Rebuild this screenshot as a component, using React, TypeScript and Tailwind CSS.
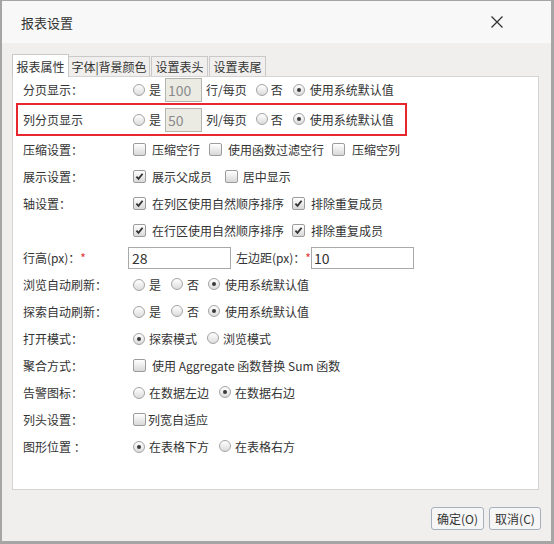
import React from "react";

const Radio = ({ checked = false }: { checked?: boolean }) => (
  <span className="relative inline-block w-[12px] h-[12px] shrink-0 rounded-full border border-[#a3a3a3] bg-linear-to-b from-[#ffffff] to-[#dcdcdc]">
    {checked && (
      <span className="absolute left-[3px] top-[3px] w-[4px] h-[4px] rounded-full bg-[#3a3a3a]" />
    )}
  </span>
);

const Check = ({ checked = false }: { checked?: boolean }) => (
  <span className="relative inline-flex items-center justify-center w-[13px] h-[13px] shrink-0 rounded-[2px] border border-[#9c9c9c] bg-linear-to-b from-[#ffffff] to-[#d8d8d8]">
    {checked && (
      <svg width="11" height="11" viewBox="0 0 11 11">
        <path d="M2.4 5.6 L4.5 7.8 L8.6 2.8" fill="none" stroke="#333" strokeWidth="1.8" />
      </svg>
    )}
  </span>
);

const Row = ({ label, children, labelW = "w-[120px]" }: { label: React.ReactNode; children?: React.ReactNode; labelW?: string }) => (
  <div className="flex items-center h-[27px]">
    <div className={`${labelW} pl-[10px] shrink-0`}>{label}</div>
    <div className="flex items-center">{children}</div>
  </div>
);

const Txt = ({ children, cls = "" }: { children: React.ReactNode; cls?: string }) => (
  <span className={`whitespace-nowrap ${cls}`}>{children}</span>
);

export default function App() {
  return (
    <div
      className="w-[554px] h-[544px] flex flex-col bg-[#f0efed] border-t border-l-2 border-r-[3px] border-b-[3px] border-[#a5a5a5] text-[12px] text-[#333] leading-none"
      style={{ fontFamily: '"Noto Sans CJK SC", "Noto Sans", sans-serif' }}
    >
      {/* title bar */}
      <div className="h-[42px] shrink-0 bg-[#f8f8f8] flex items-center justify-between pl-[19px] pr-[48px]">
        <span className="text-[13px] text-[#333]">报表设置</span>
        <svg width="12" height="12" viewBox="0 0 12 12">
          <path d="M0.5 0.5 L11.5 11.5 M11.5 0.5 L0.5 11.5" stroke="#333" strokeWidth="1.3" />
        </svg>
      </div>

      {/* body */}
      <div className="flex-1 flex flex-col pl-[10px] pr-[12px] pt-[11px]">
        {/* tabs */}
        <div className="flex items-end h-[22px]">
          <div className="relative z-10 -mb-px w-[57px] h-[23px] bg-white border border-b-0 border-[#c9c9c9] flex items-center justify-center pt-[2px]">
            报表属性
          </div>
          <div className="w-[81px] h-[20px] border border-b-0 border-l-0 border-[#c9c9c9] flex items-center justify-center pt-[1px]">
            字体|背景颜色
          </div>
          <div className="ml-[1px] w-[57px] h-[20px] border border-b-0 border-[#c9c9c9] flex items-center justify-center pt-[1px]">
            设置表头
          </div>
          <div className="ml-[1px] w-[57px] h-[20px] border border-b-0 border-[#c9c9c9] flex items-center justify-center pt-[1px]">
            设置表尾
          </div>
        </div>

        {/* panel */}
        <div className="h-[414px] bg-white border border-[#d4d4d4] flex flex-col">
          <div className="flex items-center h-[26px]">
            <div className="w-[120px] pl-[10px] shrink-0">分页显示：</div>
            <Radio />
            <Txt cls="ml-[4px]">是</Txt>
            <div className="ml-[4px] w-[37px] h-[24px] bg-[#ebebe4] border border-[#b5b5b0] flex items-center pl-[2px] text-[14px] text-[#8a8a8a]">100</div>
            <Txt cls="ml-[4px]">行/每页</Txt>
            <span className="ml-[9px]"><Radio /></span>
            <Txt cls="ml-[3px]">否</Txt>
            <span className="ml-[10px]"><Radio checked /></span>
            <Txt cls="ml-[5px]">使用系统默认值</Txt>
          </div>

          <div className="ml-[3px] w-[391px] h-[33px] border-2 border-[#e8262d] flex items-center">
            <div className="w-[115px] pl-[5px] shrink-0">列分页显示</div>
            <Radio />
            <Txt cls="ml-[4px]">是</Txt>
            <div className="ml-[4px] w-[37px] h-[24px] bg-[#ebebe4] border border-[#b5b5b0] flex items-center pl-[2px] text-[14px] text-[#8a8a8a]">50</div>
            <Txt cls="ml-[4px]">列/每页</Txt>
            <span className="ml-[9px]"><Radio /></span>
            <Txt cls="ml-[3px]">否</Txt>
            <span className="ml-[10px]"><Radio checked /></span>
            <Txt cls="ml-[5px]">使用系统默认值</Txt>
          </div>

          <Row label="压缩设置：">
            <Check />
            <Txt cls="ml-[6px]">压缩空行</Txt>
            <span className="ml-[9px]"><Check /></span>
            <Txt cls="ml-[6px]">使用函数过滤空行</Txt>
            <span className="ml-[8px]"><Check /></span>
            <Txt cls="ml-[7px]">压缩空列</Txt>
          </Row>
          <Row label="展示设置：">
            <Check checked />
            <Txt cls="ml-[6px]">展示父成员</Txt>
            <span className="ml-[13px]"><Check /></span>
            <Txt cls="ml-[2px] pl-[0px]">&nbsp;居中显示</Txt>
          </Row>
          <Row label="轴设置：">
            <Check checked />
            <Txt cls="ml-[6px]">在列区使用自然顺序排序</Txt>
            <span className="ml-[8px]"><Check checked /></span>
            <Txt cls="ml-[6px]">排除重复成员</Txt>
          </Row>
          <Row label="">
            <Check checked />
            <Txt cls="ml-[6px]">在行区使用自然顺序排序</Txt>
            <span className="ml-[8px]"><Check checked /></span>
            <Txt cls="ml-[6px]">排除重复成员</Txt>
          </Row>
          <Row
            labelW="w-[115px]"
            label={
              <span>
                行高(px)：<span className="text-[#e53935]">*</span>
              </span>
            }
          >
            <div className="w-[103px] h-[22px] border border-[#a9a9a9] flex items-center pl-[3px] text-[14px] text-[#333]">28</div>
            <Txt cls="ml-[5px]">
              左边距(px)：<span className="text-[#e53935]">*</span>
            </Txt>
            <div className="w-[103px] h-[22px] border border-[#a9a9a9] flex items-center pl-[2px] text-[14px] text-[#333]">10</div>
          </Row>
          <Row label="浏览自动刷新：">
            <Radio />
            <Txt cls="ml-[4px]">是</Txt>
            <span className="ml-[10px]"><Radio /></span>
            <Txt cls="ml-[4px]">否</Txt>
            <span className="ml-[9px]"><Radio checked /></span>
            <Txt cls="ml-[5px]">使用系统默认值</Txt>
          </Row>
          <Row label="探索自动刷新：">
            <Radio />
            <Txt cls="ml-[4px]">是</Txt>
            <span className="ml-[10px]"><Radio /></span>
            <Txt cls="ml-[4px]">否</Txt>
            <span className="ml-[9px]"><Radio checked /></span>
            <Txt cls="ml-[5px]">使用系统默认值</Txt>
          </Row>
          <Row label="打开模式：">
            <Radio checked />
            <Txt cls="ml-[4px]">探索模式</Txt>
            <span className="ml-[10px]"><Radio /></span>
            <Txt cls="ml-[4px]">浏览模式</Txt>
          </Row>
          <Row label="聚合方式：">
            <Check />
            <Txt cls="ml-[6px]">使用 Aggregate 函数替换 Sum 函数</Txt>
          </Row>
          <Row label="告警图标：">
            <Radio />
            <Txt cls="ml-[4px]">在数据左边</Txt>
            <span className="ml-[10px]"><Radio checked /></span>
            <Txt cls="ml-[4px]">在数据右边</Txt>
          </Row>
          <Row label="列头设置：">
            <Check />
            <Txt cls="ml-[2px]">列宽自适应</Txt>
          </Row>
          <Row label="图形位置 ：">
            <Radio checked />
            <Txt cls="ml-[4px]">在表格下方</Txt>
            <span className="ml-[10px]"><Radio /></span>
            <Txt cls="ml-[4px]">在表格右方</Txt>
          </Row>
        </div>

        {/* footer */}
        <div className="flex justify-end gap-[5px] mt-[17px] mr-[-2px]">
          <button className="w-[53px] h-[23px] rounded-[3px] border border-[#a7b0bd] bg-[#f6f6f6] text-[12px] text-[#333] flex items-center justify-center">
            确定(O)
          </button>
          <button className="w-[52px] h-[23px] rounded-[3px] border border-[#a7b0bd] bg-[#f6f6f6] text-[12px] text-[#333] flex items-center justify-center">
            取消(C)
          </button>
        </div>
      </div>
    </div>
  );
}
